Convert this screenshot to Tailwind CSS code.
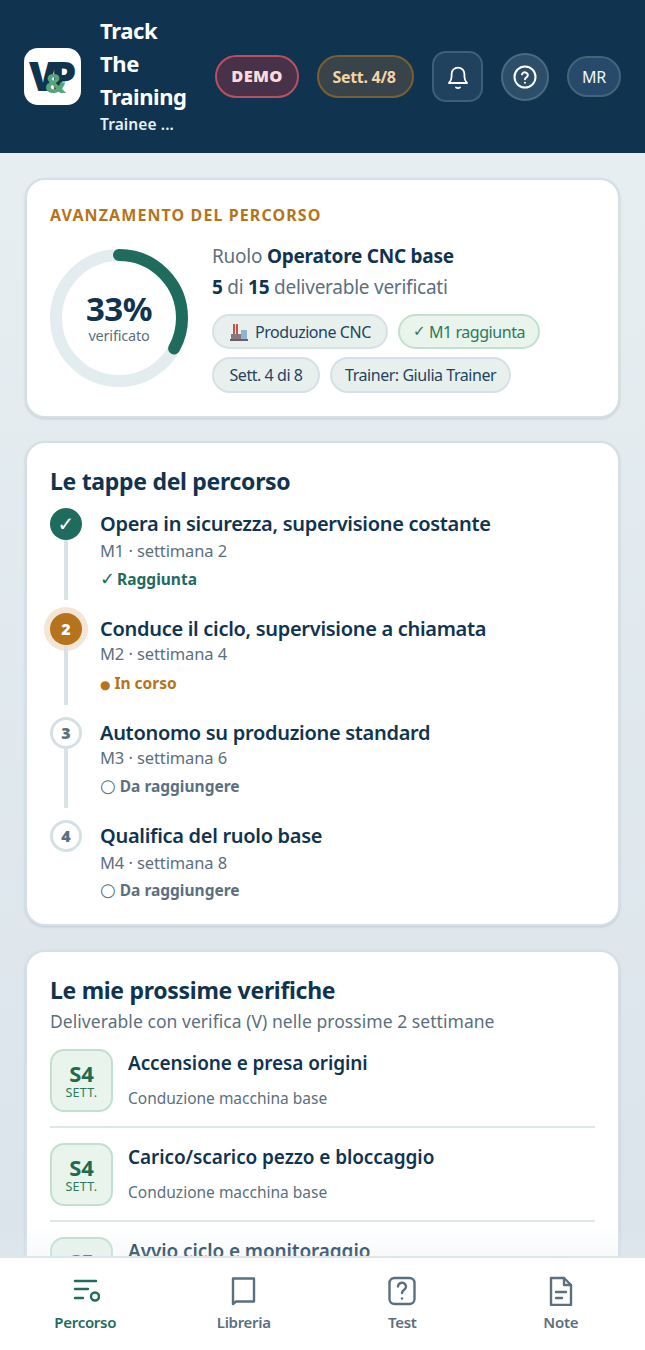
<!DOCTYPE html>
<html lang="it">
<head>
    <meta charset="UTF-8"/>
    <meta name="viewport" content="width=device-width, initial-scale=1.0"/>
    <title>Track The Training</title>
    <script src="https://cdn.jsdelivr.net/npm/@tailwindcss/browser@4"></script>
</head>
<body class="font-['Noto_Sans',sans-serif] bg-[#e4ecf0] text-[#10344f]">
<div class="flex flex-col w-[645px] h-[1350px] overflow-hidden">

    <!-- Header -->
    <header class="flex items-center h-[153px] shrink-0 pl-6 bg-[#10344f]">
        <div class="relative w-[57px] h-[57px] shrink-0 rounded-[14px] bg-white overflow-hidden">
            <span class="absolute left-[5px] top-[6px] text-[40px] leading-[44px] font-black text-[#10344f]">V</span>
            <span class="absolute left-[27px] top-[6px] text-[40px] leading-[44px] font-black text-[#10344f]">P</span>
            <span class="absolute left-[21px] top-[19px] text-[27px] leading-[32px] font-extrabold text-[#5aa577]">&amp;</span>
        </div>
        <div class="w-[115px] ml-[19px] -mt-[4px] shrink-0 text-white font-bold">
            <div class="text-[22px] leading-[33px] tracking-[-0.4px]">Track<br/>The<br/>Training</div>
            <div class="text-[15.500px] leading-[22px] tracking-[0.1px] text-[#e6f1f6] font-semibold">Trainee ...</div>
        </div>
        <div class="flex items-center">
            <span class="flex items-center justify-center w-[84px] h-[43px] rounded-full border-2 border-[#b9505f] bg-[#47324a] text-[16.500px] font-black tracking-[0.3px] text-[#fbdcdc]">DEMO</span>
            <span class="flex items-center justify-center w-[97px] h-[43px] ml-[18px] pr-[3px] rounded-full border-2 border-[#7a5f30] bg-[#38444a] text-[16px] font-bold tracking-[-0.3px] text-[#f2d5a6]">Sett. 4/8</span>
            <button class="flex items-center justify-center w-[51px] h-[51px] ml-[18px] rounded-[14px] border-2 border-[#3e5f78] bg-[#21425f]">
                <svg width="24" height="26" viewBox="0 0 24 26" fill="none" stroke="white" stroke-width="1.800" stroke-linecap="round" stroke-linejoin="round"><path d="M3 19h18c-1.600-1.600-2.600-3.200-2.600-6.500V10A6.400 6.400 0 0 0 5.600 10v2.500C5.600 15.800 4.600 17.400 3 19Z"/><path d="M10 23.500c1.200.7 2.800.7 4 0"/></svg>
            </button>
            <button class="flex items-center justify-center w-[48px] h-[48px] ml-[18px] rounded-full border-2 border-[#4a6a80] bg-[#2c4e69]">
                <svg width="26" height="26" viewBox="0 0 26 26" fill="none" stroke="white" stroke-width="2" stroke-linecap="round" stroke-linejoin="round"><circle cx="13" cy="13" r="10.500"/><path d="M10 10.300a3 3 0 0 1 5.800 1c0 2-2.800 2.400-2.800 4"/><path d="M13 18.800h.01"/></svg>
            </button>
            <span class="flex items-center justify-center w-[54px] h-[41px] ml-[18px] rounded-full border-2 border-[#44647b] bg-[#27496a] text-[16px] tracking-[-0.3px] text-[#f0f6fa]">MR</span>
        </div>
    </header>

    <!-- Content -->
    <main class="relative flex-1 min-h-0 overflow-hidden px-[25px] pt-[25px] bg-gradient-to-b from-[#e6eef1] to-[#dbe4eb]">

        <!-- Avanzamento -->
        <section class="h-[240px] pt-[25px] pl-[23px] rounded-[20px] border-2 border-[#d5e0e6] bg-white shadow-sm">
            <h2 class="text-[16px] leading-[20px] font-bold tracking-[1.100px] text-[#b5741c]">AVANZAMENTO DEL PERCORSO</h2>
            <div class="flex items-start mt-[24px]">
                <div class="relative w-[138px] h-[138px] shrink-0">
                    <svg width="138" height="138" viewBox="0 0 138 138" class="-rotate-90">
                        <circle cx="69" cy="69" r="63" fill="none" stroke="#e3ecee" stroke-width="12"/>
                        <circle cx="69" cy="69" r="63" fill="none" stroke="#1f6b5e" stroke-width="12" stroke-linecap="round" stroke-dasharray="130.600 395.800"/>
                    </svg>
                    <div class="absolute inset-0 flex flex-col items-center justify-center">
                        <span class="text-[33px] leading-[32px] font-bold tracking-[-0.5px]">33%</span>
                        <span class="mt-[2px] text-[14.500px] leading-[16px] tracking-[-0.2px] text-[#5c6f7e]">verificato</span>
                    </div>
                </div>
                <div class="ml-[24px] -mt-[8px]">
                    <p class="text-[19px] leading-[31px] tracking-[-0.25px] text-[#5c6f7e]">Ruolo <b class="font-bold text-[#10344f]">Operatore CNC base</b></p>
                    <p class="text-[19px] leading-[31px] tracking-[-0.25px] text-[#5c6f7e]"><b class="font-bold text-[#10344f]">5</b> di <b class="font-bold text-[#10344f]">15</b> deliverable verificati</p>
                    <div class="flex flex-wrap gap-x-[10px] gap-y-[8px] w-[360px] mt-[11px]">
                        <span class="flex items-center h-[35px] px-[15px] rounded-full border-2 border-[#d5e1e5] bg-[#e8f0ee] text-[16px] tracking-[-0.45px] text-[#1d4560]">
                            <svg width="20" height="20" viewBox="0 0 20 20" class="mr-[6px]"><rect x="4" y="2" width="2" height="11" fill="#c9524a"/><rect x="7" y="2" width="2" height="11" fill="#c9524a"/><rect x="2" y="12" width="10" height="6" fill="#86787d"/><rect x="12" y="8" width="6" height="10" fill="#8fb4d2"/><rect x="1" y="17" width="18" height="2" fill="#6b5f66"/></svg>Produzione CNC</span>
                        <span class="flex items-center h-[35px] px-[13px] rounded-full border-2 border-[#c2e0cf] bg-[#e8f4ec] text-[16px] tracking-[-0.45px] text-[#2e7a58]"><span class="mr-[4px] font-['DejaVu_Sans'] text-[15px]">✓</span>M1 raggiunta</span>
                        <span class="flex items-center h-[36px] px-[15.500px] rounded-full border-2 border-[#d5e1e5] bg-[#e8f0ee] text-[16px] tracking-[-0.45px] text-[#1d4560]">Sett. 4 di 8</span>
                        <span class="flex items-center h-[36px] px-[13px] rounded-full border-2 border-[#d5e1e5] bg-[#e8f0ee] text-[16px] tracking-[-0.45px] text-[#1d4560]">Trainer: Giulia Trainer</span>
                    </div>
                </div>
            </div>
        </section>

        <!-- Tappe -->
        <section class="h-[485px] mt-[23px] pt-[23px] pl-[23px] rounded-[20px] border-2 border-[#d5e0e6] bg-white shadow-sm">
            <h2 class="text-[23px] leading-[30px] font-bold tracking-[-0.3px]">Le tappe del percorso</h2>
            <ol class="mt-[12px]">
                <li class="flex h-[104.500px]">
                    <div class="flex flex-col items-center w-[32px] shrink-0">
                        <span class="flex items-center justify-center w-[32px] h-[32px] shrink-0 rounded-full bg-[#1f6b5e] font-['DejaVu_Sans'] text-[20px] font-bold text-white">✓</span>
                        <span class="w-[3.500px] h-[60px] bg-[#d9e3e6]"></span>
                    </div>
                    <div class="ml-[18px] pt-[3px]">
                        <h3 class="text-[20px] leading-[26px] font-semibold tracking-[-0.3px]">Opera in sicurezza, supervisione costante</h3>
                        <p class="mt-[2px] text-[16.500px] leading-[24px] tracking-[-0.1px] text-[#5c6f7e]">M1 · settimana 2</p>
                        <p class="mt-[5px] text-[15.500px] leading-[22px] font-bold text-[#1f6b5e]"><span class="mr-[2px] font-['DejaVu_Sans'] text-[18px] leading-[18px] font-normal">✓</span>Raggiunta</p>
                    </div>
                </li>
                <li class="flex h-[104px]">
                    <div class="flex flex-col items-center w-[32px] shrink-0">
                        <span class="flex items-center justify-center w-[32px] h-[32px] shrink-0 rounded-full bg-[#b5741c] ring-[6px] ring-[#f3e6d6] text-[16px] font-black text-white">2</span>
                        <span class="w-[3.500px] h-[60px] bg-[#d9e3e6]"></span>
                    </div>
                    <div class="ml-[18px] pt-[3px]">
                        <h3 class="text-[20px] leading-[26px] font-semibold tracking-[-0.3px]">Conduce il ciclo, supervisione a chiamata</h3>
                        <p class="text-[16.500px] leading-[24px] tracking-[-0.1px] text-[#5c6f7e]">M2 · settimana 4</p>
                        <p class="mt-[6px] text-[15.500px] leading-[22px] font-bold text-[#b5741c]"><span class="mr-[4px] font-['DejaVu_Sans'] text-[12px] font-normal">●</span>In corso</p>
                    </div>
                </li>
                <li class="flex h-[103px]">
                    <div class="flex flex-col items-center w-[32px] shrink-0">
                        <span class="flex items-center justify-center w-[32px] h-[32px] shrink-0 rounded-full border-[3px] border-[#d5e0e4] bg-white text-[16px] font-black text-[#5c6f7e]">3</span>
                        <span class="w-[3.500px] h-[59px] bg-[#d9e3e6]"></span>
                    </div>
                    <div class="ml-[18px] pt-[3px]">
                        <h3 class="text-[20px] leading-[26px] font-semibold tracking-[-0.3px]">Autonomo su produzione standard</h3>
                        <p class="text-[16.500px] leading-[24px] tracking-[-0.1px] text-[#5c6f7e]">M3 · settimana 6</p>
                        <p class="mt-[5px] text-[15.500px] leading-[22px] font-bold text-[#5c6f7e]"><span class="mr-[4px] font-['DejaVu_Sans'] text-[18px] leading-[18px] font-normal">○</span>Da raggiungere</p>
                    </div>
                </li>
                <li class="flex">
                    <div class="flex flex-col items-center w-[32px] shrink-0">
                        <span class="flex items-center justify-center w-[32px] h-[32px] shrink-0 rounded-full border-[3px] border-[#d5e0e4] bg-white text-[16px] font-black text-[#5c6f7e]">4</span>
                    </div>
                    <div class="ml-[18px] pt-[3px]">
                        <h3 class="text-[20px] leading-[26px] font-semibold tracking-[-0.3px]">Qualifica del ruolo base</h3>
                        <p class="mt-[2px] text-[16.500px] leading-[24px] tracking-[-0.1px] text-[#5c6f7e]">M4 · settimana 8</p>
                        <p class="mt-[4px] text-[15.500px] leading-[22px] font-bold text-[#5c6f7e]"><span class="mr-[4px] font-['DejaVu_Sans'] text-[18px] leading-[18px] font-normal">○</span>Da raggiungere</p>
                    </div>
                </li>
            </ol>
        </section>

        <!-- Verifiche -->
        <section class="h-[400px] mt-[24px] pt-[23px] px-[23px] rounded-[20px] border-2 border-[#d5e0e6] bg-white shadow-sm">
            <h2 class="text-[23px] leading-[30px] font-bold tracking-[-0.3px]">Le mie prossime verifiche</h2>
            <p class="mt-[1px] text-[17.500px] leading-[30px] tracking-[0.05px] text-[#5c6f7e]">Deliverable con verifica (V) nelle prossime 2 settimane</p>
            <ul class="mt-[13px]">
                <li class="flex h-[79px] border-b-2 border-[#dfe6e9]">
                    <div class="flex flex-col items-center justify-center w-[63px] h-[63px] shrink-0 rounded-[14px] border-2 border-[#c2e0cf] bg-[#e8f4ec]">
                        <span class="text-[22px] leading-[24px] font-bold text-[#1f6b4e]">S4</span>
                        <span class="text-[12.500px] leading-[15px] tracking-[0.3px] text-[#2e7a58]">SETT.</span>
                    </div>
                    <div class="ml-[15px]">
                        <h3 class="text-[19px] leading-[28px] font-semibold tracking-[-0.1px]">Accensione e presa origini</h3>
                        <p class="mt-[10px] text-[15.500px] leading-[22px] text-[#5c6f7e]">Conduzione macchina base</p>
                    </div>
                </li>
                <li class="flex h-[94px] pt-[15px] border-b-2 border-[#dfe6e9]">
                    <div class="flex flex-col items-center justify-center w-[63px] h-[63px] shrink-0 rounded-[14px] border-2 border-[#c2e0cf] bg-[#e8f4ec]">
                        <span class="text-[22px] leading-[24px] font-bold text-[#1f6b4e]">S4</span>
                        <span class="text-[12.500px] leading-[15px] tracking-[0.3px] text-[#2e7a58]">SETT.</span>
                    </div>
                    <div class="ml-[15px]">
                        <h3 class="text-[19px] leading-[28px] font-semibold tracking-[-0.1px]">Carico/scarico pezzo e bloccaggio</h3>
                        <p class="mt-[10px] text-[15.500px] leading-[22px] text-[#5c6f7e]">Conduzione macchina base</p>
                    </div>
                </li>
                <li class="flex h-[94px] pt-[15px]">
                    <div class="flex flex-col items-center justify-center w-[63px] h-[63px] shrink-0 rounded-[14px] border-2 border-[#c2e0cf] bg-[#e8f4ec]">
                        <span class="text-[22px] leading-[24px] font-bold text-[#1f6b4e]">S5</span>
                        <span class="text-[12.500px] leading-[15px] tracking-[0.3px] text-[#2e7a58]">SETT.</span>
                    </div>
                    <div class="ml-[15px]">
                        <h3 class="text-[19px] leading-[28px] font-semibold tracking-[-0.1px]">Avvio ciclo e monitoraggio</h3>
                    </div>
                </li>
            </ul>
        </section>

        <div class="absolute inset-x-0 bottom-0 h-[30px] bg-gradient-to-b from-white/0 to-[#e4ecf0]/30"></div>
    </main>

    <!-- Bottom nav -->
    <nav class="grid grid-cols-4 h-[94px] shrink-0 pl-[6px] pr-[5px] border-t-2 border-[#dfe6e9] bg-white text-[15px] font-semibold tracking-[-0.3px] text-[#5c6f7e]">
        <a class="flex flex-col items-center pt-[18px] text-[#1f6b5e]">
            <svg width="30" height="30" viewBox="0 0 30 30" fill="none" stroke="currentColor" stroke-width="2.400" stroke-linecap="round"><path d="M5 5h21"/><path d="M5 13h13"/><path d="M5 22h8"/><circle cx="25" cy="20.500" r="4"/></svg>
            <span class="mt-[6px] leading-[20px]">Percorso</span>
        </a>
        <a class="flex flex-col items-center pt-[18px]">
            <svg width="30" height="30" viewBox="0 0 30 30" fill="none" stroke="currentColor" stroke-width="2.400" stroke-linejoin="round"><path d="M4 2.500h21v23H7L4 28V2.500Z"/></svg>
            <span class="mt-[6px] leading-[20px]">Libreria</span>
        </a>
        <a class="flex flex-col items-center pt-[18px]">
            <svg width="30" height="30" viewBox="0 0 30 30" fill="none" stroke="currentColor" stroke-width="2.400" stroke-linecap="round" stroke-linejoin="round"><rect x="2.500" y="2" width="25" height="26" rx="5"/><path d="M11 10.500a4 4 0 0 1 8 .5c0 2.500-4 3-4 6"/><path d="M15 22.500h.01"/></svg>
            <span class="mt-[6px] leading-[20px]">Test</span>
        </a>
        <a class="flex flex-col items-center pt-[18px]">
            <svg width="30" height="30" viewBox="0 0 30 30" fill="none" stroke="currentColor" stroke-width="2.400" stroke-linecap="round" stroke-linejoin="round"><path d="M5 2h13l7 7v20H5V2Z"/><path d="M18 2v7h7"/><path d="M10 16h10"/><path d="M10 22h6"/></svg>
            <span class="mt-[6px] leading-[20px]">Note</span>
        </a>
    </nav>
</div>
</body>
</html>
